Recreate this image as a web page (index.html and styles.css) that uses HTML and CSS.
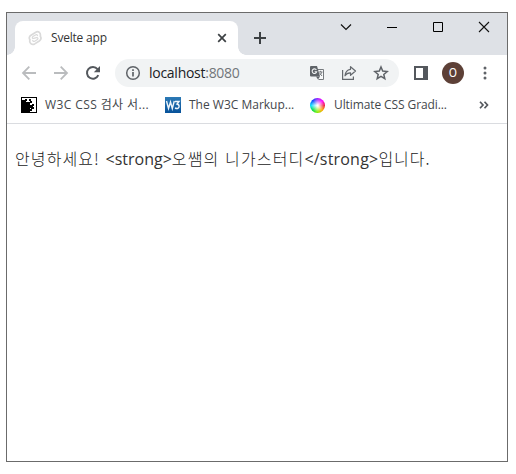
FILE: index.html
```html
<!DOCTYPE html>
<html lang="ko">
<head>
<meta charset="utf-8">
<title>Svelte app</title>
<link rel="stylesheet" href="styles.css">
</head>
<body>
<div class="window">
  <header class="tabstrip">
    <div class="tab">
      <svg class="favicon" width="16" height="16" viewBox="0 0 16 16" fill="none" stroke="#dadada" stroke-width="1.700" stroke-linejoin="round" stroke-linecap="round"><path d="M13.300 6.300C14 3 11.500 .8 8.800 2.200L4 5.200C1.800 6.700 2 8.500 3 9.800 1.800 13 5 15.500 7.700 13.900L12.300 11C14.300 9.600 14.200 7.600 13.300 6.300Z"/><path d="M10.500 5.600C10.300 4.500 9.300 4.400 8.500 4.900L5.800 6.600C4.800 7.500 5.400 8.700 6.700 8.400L9.500 7.700C11 7.500 11.400 8.700 10.400 9.500L7.700 11.200C6.800 11.700 5.900 11.400 5.700 10.400" stroke-width="1.200"/></svg>
      <span class="tab-title">Svelte app</span>
      <svg class="tab-close" width="10" height="10" viewBox="0 0 10 10" stroke="#3c4043" stroke-width="1.700"><path d="M1.200 1.200 8.800 8.800M8.800 1.200 1.200 8.800"/></svg>
    </div>
    <svg class="new-tab" width="12" height="12" viewBox="0 0 12 12" stroke="#3c4043" stroke-width="2"><path d="M6 0V12M0 6H12"/></svg>
    <div class="controls">
      <svg width="12" height="12" viewBox="0 0 12 12" fill="none" stroke="#111" stroke-width="1.200"><path d="M1 3.500 6 8.500 11 3.500"/></svg>
      <svg width="12" height="12" viewBox="0 0 12 12" stroke="#000"><path d="M1 6.500H11"/></svg>
      <svg width="12" height="12" viewBox="0 0 12 12" fill="none" stroke="#000"><path d="M1.500 1.500H10.500V10.500H1.500Z"/></svg>
      <svg width="12" height="12" viewBox="0 0 12 12" stroke="#111" stroke-width="1.100"><path d="M1 1 11 11M11 1 1 11"/></svg>
    </div>
  </header>

  <nav class="toolbar">
    <div class="nav-buttons">
      <svg width="16" height="16" viewBox="0 0 16 16" fill="none" stroke="#babcbe" stroke-width="1.800"><path d="M15 8H2.500M8.300 1.700 2 8 8.300 14.300"/></svg>
      <svg width="16" height="16" viewBox="0 0 16 16" fill="none" stroke="#babcbe" stroke-width="1.800"><path d="M1 8H13.500M7.700 1.700 14 8 7.700 14.300"/></svg>
      <svg width="16" height="16" viewBox="0 0 16 16"><path d="M13.300 10.200A5.900 5.900 0 1 1 12.500 4.100" fill="none" stroke="#54585d" stroke-width="2"/><path d="M15 1V7.200H8.800Z" fill="#54585d"/></svg>
    </div>
    <div class="omnibox">
      <svg width="16" height="16" viewBox="0 0 16 16" fill="none" stroke="#5f6368" stroke-width="1.500"><circle cx="8" cy="8" r="6.300"/><path d="M8 7V11.500M8 4.300V6" stroke-width="1.700"/></svg>
      <span class="url">localhost<span class="port">:8080</span></span>
      <div class="omni-actions">
        <svg width="16" height="16" viewBox="0 0 16 16"><path d="M6 4.500H14.500V14.500H9.500" fill="#f8f9fa" stroke="#75797d"/><path d="M2 1H8L11 11.500H2Q1 11.500 1 10.500V2Q1 1 2 1Z" fill="#5f6368"/><path d="M7 11.500H11L9 14.500Z" fill="#5f6368"/><path d="M7.400 4.900A2.300 2.300 0 1 0 7.700 6.700H5.600" fill="none" stroke="#f1f3f4" stroke-width="1.100"/><path d="M9.800 7H13.500M11.600 5.800V7M12.800 7.200Q12 9.500 10.500 10.300M10.700 8.200 13 11" fill="none" stroke="#75797d"/></svg>
        <svg width="16" height="16" viewBox="0 0 16 16" fill="none" stroke="#65696e" stroke-width="1.200"><path d="M1.600 5V14.400H12.400V11.500"/><path d="M9.500 1.700 14.500 6 9.500 10.300V7.800Q6 7.600 4 10.800 4.500 5 9.500 4.300Z" stroke-linejoin="round"/></svg>
        <svg width="16" height="16" viewBox="0 0 16 16" fill="none" stroke="#5f6368" stroke-width="1.500"><path d="M8 2 9.700 6.100 14.200 6.500 10.800 9.400 11.800 13.700 8 11.400 4.200 13.700 5.200 9.400 1.800 6.500 6.300 6.100Z"/></svg>
      </div>
    </div>
    <svg class="panel" width="14" height="14" viewBox="0 0 14 14"><path d="M0 0H14V14H0ZM2 2V12H9V2Z" fill="#54585d" fill-rule="evenodd"/></svg>
    <span class="avatar">O</span>
    <svg class="menu" width="4" height="14" viewBox="0 0 4 14" fill="#5f6368"><circle cx="2" cy="2" r="1.500"/><circle cx="2" cy="7" r="1.500"/><circle cx="2" cy="12" r="1.500"/></svg>
  </nav>

  <div class="bookmarks">
    <div class="bookmark first">
      <svg width="16" height="16" viewBox="0 0 16 16"><path d="M0 0H16V16H0Z" fill="#000"/><path d="M1 1H15V15H9V13H8V11.500H9V10H8V8H6.500V6.500H5V5H3V3.500H1Z" fill="#fff"/><path d="M1 3H4V2H6V4H5V5H9V4H8V2H10V4H11V6H9V15H1Z" fill="#000"/><path d="M9 8H11V7H13V9H12V10H13V12H10V11H9ZM9 12H11V14H9Z" fill="#000"/></svg>
      <span class="label css">W3C CSS 검사 서...</span>
    </div>
    <div class="bookmark second">
      <svg width="16" height="16" viewBox="0 0 16 16"><defs><linearGradient id="blue" x2="0" y2="1"><stop stop-color="#2c79b5"/><stop offset="1" stop-color="#07529a"/></linearGradient></defs><path d="M0 0H16V16H0Z" fill="url(#blue)"/><path d="M1.500 4 3.500 11.500 5.500 5 7.300 11.500 9.300 4M10 4.500H14L12 7Q14.500 7.500 14 10 13 12.500 10 11" fill="none" stroke="#eef5fb" stroke-width="1.400"/></svg>
      <span class="label markup">The W3C Markup...</span>
    </div>
    <div class="bookmark third">
      <span class="wheel"></span>
      <span class="label gradient">Ultimate CSS Gradi...</span>
    </div>
    <svg class="more" width="10" height="8" viewBox="0 0 10 8" fill="none" stroke="#54585d" stroke-width="1.700"><path d="M1 .7 4 4 1 7.300M5.500.700 8.500 4 5.500 7.300"/></svg>
  </div>

  <main class="page"><span class="ko hello">안녕하세요! </span><span class="open">&lt;strong&gt;</span><span class="ko name">오쌤의 니가스터디</span><span class="close">&lt;/strong&gt;</span><span class="ko end">입니다.</span></main>
</div>
</body>
</html>
```
FILE: styles.css
```css
* { box-sizing: border-box; }
body {
  margin: 0;
  padding: 12px 0 0 6px;
  background: #fff;
  color: #333;
  font-family: "Open Sans", "Noto Sans CJK KR", sans-serif;
}
svg { display: block; flex: none; }
.window {
  width: 502px;
  height: 450px;
  border: 1px solid #6b6b6b;
  background: #fff;
}
.tabstrip {
  display: flex;
  height: 42px;
  padding: 8px 17px 0 8px;
  background: #dee1e6;
}
.tab {
  position: relative;
  display: flex;
  align-items: center;
  width: 223px;
  height: 34px;
  padding: 0 11px 0 12px;
  border-radius: 8px 8px 0 0;
  background: #fff;
}
.tab::before, .tab::after {
  content: "";
  position: absolute;
  bottom: 0;
  width: 8px;
  height: 8px;
}
.tab::before { left: -8px; background: radial-gradient(circle at 0 0, transparent 7.5px, #fff 8px); }
.tab::after { right: -8px; background: radial-gradient(circle at 100% 0, transparent 7.5px, #fff 8px); }
.tab-title { margin-left: 8px; font-size: 12px; line-height: 16px; white-space: nowrap; letter-spacing: -.2px; }
.tab-close { margin-left: auto; }
.new-tab { margin: 11px 0 0 16px; }
.controls { display: flex; gap: 34px; margin: 0 0 0 auto; }
.toolbar { display: flex; align-items: center; height: 36px; padding: 0 20px 0 14px; }
.nav-buttons { display: flex; gap: 16px; }
.omnibox {
  display: flex;
  align-items: center;
  width: 284px;
  height: 28px;
  margin-left: 14px;
  padding: 0 10px;
  border-radius: 14px;
  background: #f1f3f4;
}
.url { margin-left: 8px; font-size: 14px; line-height: 20px; letter-spacing: -.27px; white-space: nowrap; color: #202124; }
.port { color: #72767a; }
.omni-actions { display: flex; gap: 16px; margin-left: auto; }
.panel { margin-left: 15px; }
.avatar {
  display: flex;
  align-items: center;
  justify-content: center;
  width: 22px;
  height: 22px;
  margin-left: 14px;
  border-radius: 50%;
  background: #5d4037;
  color: #fff;
  font: 12px Roboto, sans-serif;
}
.menu { margin-left: auto; }
.bookmarks {
  display: flex;
  align-items: center;
  height: 33px;
  padding: 0 18px 4px 14px;
  border-bottom: 1px solid #dadce0;
}
.bookmark { display: flex; align-items: center; gap: 8px; }
.first { width: 144px; }
.second { width: 145px; }
.wheel {
  width: 15px;
  height: 15px;
  border-radius: 50%;
  background: radial-gradient(circle, #fff 5%, transparent 65%), conic-gradient(#9c20ff, #f0f, #f02040, #fa0, #8e0, #0d4, #0df, #04f, #9c20ff);
}
.third { gap: 9px; }
.label { font-size: 12px; line-height: 16px; white-space: nowrap; color: #44474b; }
.css { letter-spacing: .4px; }
.gradient { letter-spacing: -.1px; }
.more { margin-left: auto; }
.page { padding: 22px 8px; font-size: 16px; line-height: 24px; white-space: pre; }
.ko { font-family: "Noto Sans CJK KR", sans-serif; font-weight: 300; color: #222; }
.hello { letter-spacing: 1.1px; }
.name { letter-spacing: 1.150px; }
.close { letter-spacing: .2px; }
.end { letter-spacing: 1px; }
```
